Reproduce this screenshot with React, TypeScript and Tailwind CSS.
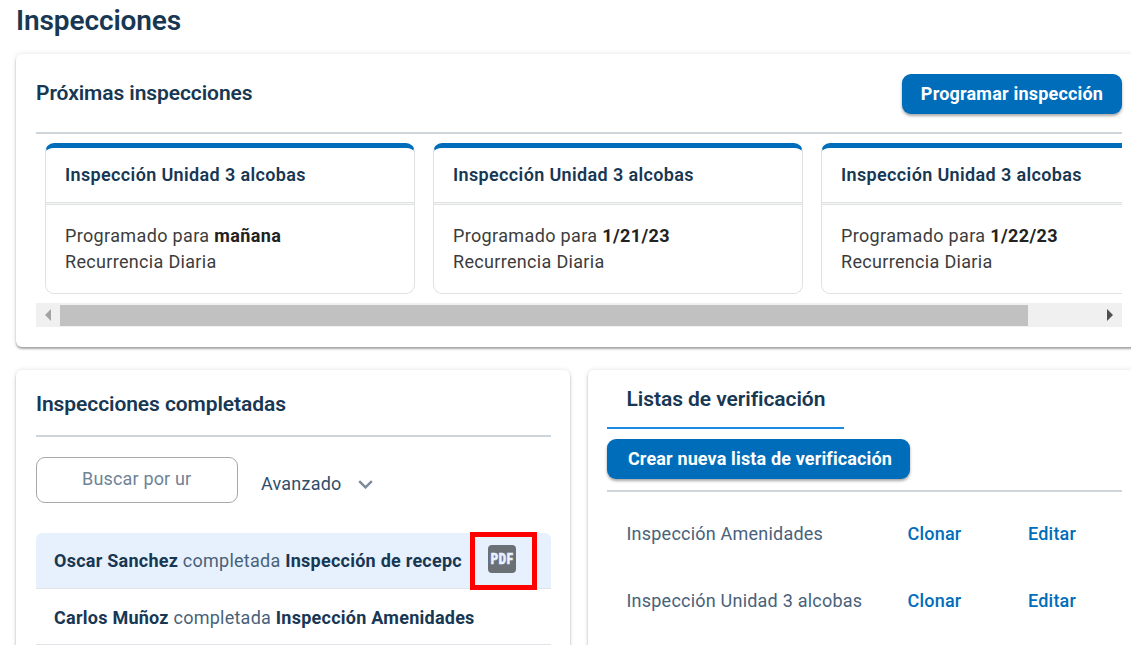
import React from "react";
import { clsx } from "clsx";

interface ScheduledInspection {
  title: string;
  when: string;
}

interface CompletedInspection {
  author: string;
  inspection: string;
  highlighted: boolean;
}

const scheduled: ScheduledInspection[] = [
  { title: "Inspección Unidad 3 alcobas", when: "mañana" },
  { title: "Inspección Unidad 3 alcobas", when: "1/21/23" },
  { title: "Inspección Unidad 3 alcobas", when: "1/22/23" },
];

const completed: CompletedInspection[] = [
  {
    author: "Oscar Sanchez",
    inspection: "Inspección de recepc",
    highlighted: true,
  },
  {
    author: "Carlos Muñoz",
    inspection: "Inspección Amenidades",
    highlighted: false,
  },
];

const checklists = ["Inspección Amenidades", "Inspección Unidad 3 alcobas"];

const cardShadow =
  "rounded-md bg-white shadow-[0_2px_2px_rgba(0,0,0,0.3),0_0_5px_rgba(0,0,0,0.12)]";

function PrimaryButton({
  children,
  className,
}: {
  children: React.ReactNode;
  className?: string;
}) {
  return (
    <button
      className={clsx(
        "h-10 shrink-0 rounded-[9px] bg-[#006dba] text-center text-[18px] font-bold whitespace-nowrap text-white shadow-[0_2px_3px_rgba(0,0,0,0.35)]",
        className,
      )}
    >
      {children}
    </button>
  );
}

function ScheduledCard({ title, when }: ScheduledInspection) {
  return (
    <article className="h-[151px] w-[370px] shrink-0 rounded-[9px] border border-t-[5px] border-[#dfe1e3] border-t-[#006dba]">
      <h3 className="h-[54px] pl-[19px] text-[18px] leading-[54px] font-semibold tracking-[0.36px] text-[#173753]">
        {title}
      </h3>
      <div className="h-[3px] border-y border-[#dfe1e3] bg-[#f4f5f5]" />
      <div className="pt-[18px] pl-[19px] text-[18px] leading-[26px] tracking-[0.36px] text-[#3c3c3c]">
        <p>
          Programado para <b className="font-bold text-[#222]">{when}</b>
        </p>
        <p className="tracking-[0.32px]">Recurrencia Diaria</p>
      </div>
    </article>
  );
}

function HorizontalScrollbar() {
  return (
    <div className="mt-[9px] flex h-6 items-center bg-[#f0f0f0]">
      <svg className="h-6 w-6" viewBox="0 0 24 24" fill="#a3a3a3">
        <path d="M15 6v12l-6-6z" />
      </svg>
      <div className="h-[21px] w-[968px] bg-[#c1c1c1]" />
      <svg className="ml-auto h-6 w-6" viewBox="0 0 24 24" fill="#505050">
        <path d="M9 6v12l6-6z" />
      </svg>
    </div>
  );
}

function UpcomingPanel() {
  return (
    <section className={clsx(cardShadow, "h-[293px] w-[1124px] pr-[18px] pl-5")}>
      <div className="flex h-[80px] items-center justify-between border-b-2 border-[#cdd4da]">
        <h2 className="pt-0.5 text-[21px] font-semibold tracking-[-0.08px] text-[#173753]">
          Próximas inspecciones
        </h2>
        <PrimaryButton className="mt-px w-[220px] pb-px tracking-[0.2px]">
          Programar inspección
        </PrimaryButton>
      </div>
      <div className="mt-[9px] flex gap-[18px] overflow-hidden pl-[9px]">
        {scheduled.map((item) => (
          <ScheduledCard key={item.when} {...item} />
        ))}
      </div>
      <HorizontalScrollbar />
    </section>
  );
}

function PdfButton() {
  return (
    <button className="mr-[14px] flex h-[58px] w-[67px] shrink-0 items-center border-5 border-[#fe0000] pl-[13px]">
      <span className="mb-[3px] flex h-7 w-7 items-center justify-center rounded-[4px] bg-[#6b6f76] text-[#e7f1fe]">
        <span className="scale-x-[0.8] text-[14px] leading-none font-black tracking-[0.8px] [-webkit-text-stroke:0.7px_#e7f1fe]">
          PDF
        </span>
      </span>
    </button>
  );
}

function CompletedPanel() {
  return (
    <section className={clsx(cardShadow, "h-[320px] w-[554px] shrink-0 px-5")}>
      <h2 className="h-[67px] w-[515px] border-b-2 border-[#cdd4da] text-[21px] leading-[68px] font-semibold tracking-[-0.08px] text-[#173753]">
        Inspecciones completadas
      </h2>
      <div className="mt-5 flex h-[46px]">
        <div className="flex h-[46px] w-[202px] items-center rounded-[9px] border border-[#a8a8a8] pb-1 pl-[45px] text-[18px] tracking-[0.17px] text-[#6f8396]">
          Buscar por ur
        </div>
        <div className="mt-1.5 ml-[23px] flex items-center text-[18px] tracking-[0.22px] text-[#2f4e6b]">
          Avanzado
          <svg
            className="mt-[3px] ml-4 h-[9px] w-[15px]"
            viewBox="0 0 15 9"
            fill="none"
            stroke="#7c8a9a"
            strokeWidth="2.4"
          >
            <path d="M1.2 1.2l6.3 6.2 6.3-6.2" />
          </svg>
        </div>
      </div>
      <ul className="mt-[30px] w-[515px]">
        {completed.map(({ author, inspection, highlighted }) => (
          <li
            key={author}
            className={clsx(
              "flex h-14 items-center justify-between border-b border-[#e0e3e8] pl-[18px] text-[18px] tracking-[0.25px] whitespace-nowrap text-[#48627a]",
              highlighted ? "rounded-t-md bg-[#e7f1fe]" : "pt-0.5",
            )}
          >
            <span>
              <b className="font-bold text-[#173753]">{author}</b> completada{" "}
              <b className="font-bold text-[#173753]">{inspection}</b>
            </span>
            {highlighted && <PdfButton />}
          </li>
        ))}
      </ul>
    </section>
  );
}

function ChecklistsPanel() {
  return (
    <section
      className={clsx(cardShadow, "h-[320px] w-[560px] shrink-0 pl-[19px]")}
    >
      <h2 className="h-[59px] w-[237px] border-b-2 border-[#1a8be0] pl-[19.5px] text-[21px] leading-[58px] font-semibold tracking-[-0.06px] text-[#173753]">
        Listas de verificación
      </h2>
      <div className="mt-[10px] h-[53px] w-[515px] border-b-2 border-[#cdd4da]">
        <PrimaryButton className="w-[303px] pb-0.5 pl-[3px] tracking-[0.14px]">
          Crear nueva lista de verificación
        </PrimaryButton>
      </div>
      <ul className="pt-2 pl-[19.5px] text-[18px] tracking-[0.22px]">
        {checklists.map((name) => (
          <li key={name} className="flex h-[67px] items-center">
            <span className="w-[281px] text-[#48627a]">{name}</span>
            <a className="w-[120.5px] font-medium text-[#006dba]">Clonar</a>
            <a className="font-medium text-[#006dba]">Editar</a>
          </li>
        ))}
      </ul>
    </section>
  );
}

export default function App() {
  return (
    <div className="h-[645px] w-full overflow-hidden bg-white font-['Roboto',sans-serif]">
      <main className="h-full w-[1131px] overflow-hidden pl-4">
        <h1 className="h-[54px] text-[28px] leading-[42px] font-semibold tracking-[-0.1px] text-[#173753]">
          Inspecciones
        </h1>
        <UpcomingPanel />
        <div className="mt-[23px] flex gap-[18px]">
          <CompletedPanel />
          <ChecklistsPanel />
        </div>
      </main>
    </div>
  );
}
